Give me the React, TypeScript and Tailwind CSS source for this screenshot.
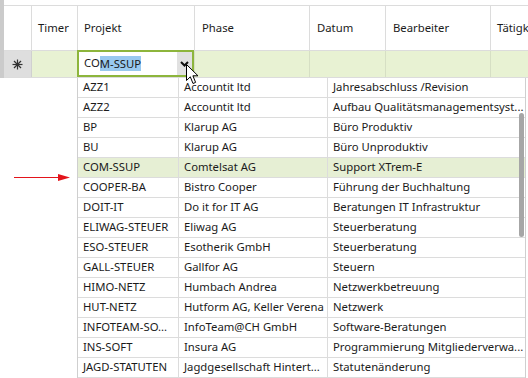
const rows: [string, string, string][] = [
  ['AZZ1', 'Accountit ltd', 'Jahresabschluss /Revision'],
  ['AZZ2', 'Accountit ltd', 'Aufbau Qualitätsmanagementsyst...'],
  ['BP', 'Klarup AG', 'Büro Produktiv'],
  ['BU', 'Klarup AG', 'Büro Unproduktiv'],
  ['COM-SSUP', 'Comtelsat AG', 'Support XTrem-E'],
  ['COOPER-BA', 'Bistro Cooper', 'Führung der Buchhaltung'],
  ['DOIT-IT', 'Do it for IT AG', 'Beratungen IT Infrastruktur'],
  ['ELIWAG-STEUER', 'Eliwag AG', 'Steuerberatung'],
  ['ESO-STEUER', 'Esotherik GmbH', 'Steuerberatung'],
  ['GALL-STEUER', 'Gallfor AG', 'Steuern'],
  ['HIMO-NETZ', 'Humbach Andrea', 'Netzwerkbetreuung'],
  ['HUT-NETZ', 'Hutform AG, Keller Verena', 'Netzwerk'],
  ['INFOTEAM-SO...', 'InfoTeam@CH GmbH', 'Software-Beratungen'],
  ['INS-SOFT', 'Insura AG', 'Programmierung Mitgliederverwa...'],
  ['JAGD-STATUTEN', 'Jagdgesellschaft Hintert...', 'Statutenänderung'],
];

const selected = 'COM-SSUP';

function Asterisk() {
  return (
    <svg width="11" height="11" viewBox="0 0 11 11" stroke="#333" strokeWidth="1.2">
      <line x1="5.5" y1="0.5" x2="5.5" y2="10.5" />
      <line x1="0.5" y1="5.5" x2="10.5" y2="5.5" />
      <line x1="2" y1="2" x2="9" y2="9" />
      <line x1="9" y1="2" x2="2" y2="9" />
    </svg>
  );
}

export default function App() {
  return (
    <div
      className="relative w-[528px] h-[378px] overflow-hidden bg-white text-[11.3px] text-[#1b1b1b]"
      style={{ fontFamily: '"Segoe UI", "Noto Sans", sans-serif' }}
    >
      {/* grid header + new row */}
      <div className="flex h-[78px]">
        <div className="w-[4px] shrink-0 bg-[#cbcbcb]" />
        <div className="flex-1 min-w-0 pt-[5px]">
          <div className="flex h-[46px] border-t border-b border-[#dcdcdc]">
            <div className="w-[28px] shrink-0 border-r border-[#dcdcdc]" />
            <div className="w-[46px] shrink-0 border-r border-[#dcdcdc] flex items-center pl-[6px]">Timer</div>
            <div className="w-[117px] shrink-0 border-r border-[#dcdcdc] flex items-center pl-[6px]">Projekt</div>
            <div className="w-[115px] shrink-0 border-r border-[#dcdcdc] flex items-center pl-[7px]">Phase</div>
            <div className="w-[76px] shrink-0 border-r border-[#dcdcdc] flex items-center pl-[7px]">Datum</div>
            <div className="w-[105px] shrink-0 border-r border-[#dcdcdc] flex items-center pl-[7px]">Bearbeiter</div>
            <div className="flex-1 min-w-0 overflow-hidden flex items-center pl-[6px] whitespace-nowrap">Tätigkeit</div>
          </div>
          <div className="flex h-[27px] bg-[#e8f2d3] border-b border-[#dcdcdc]">
            <div className="w-[28px] shrink-0 bg-[#dedede] border-r border-[#d0d0d0] flex items-center justify-center">
              <Asterisk />
            </div>
            <div className="w-[46px] shrink-0 border-r border-[#d6dfc4]" />
            <div className="w-[117px] shrink-0 border-r border-[#d6dfc4]" />
            <div className="w-[115px] shrink-0 border-r border-[#d6dfc4]" />
            <div className="w-[76px] shrink-0 border-r border-[#d6dfc4]" />
            <div className="w-[105px] shrink-0 border-r border-[#d6dfc4]" />
            <div className="flex-1 min-w-0" />
          </div>
        </div>
      </div>

      {/* combo editor */}
      <div className="absolute left-[77px] top-[50px] w-[117px] h-[27px] border-2 border-[#8db53c] bg-white flex items-center">
        <div className="flex-1 pl-[5px] flex items-center">
          <span>CO</span>
          <span className="bg-[#99c9ef] leading-[15px]">M-SSUP</span>
        </div>
        <div className="w-[15px] h-[23px] bg-[#e1e1e1] flex items-center justify-center">
          <svg width="9" height="6" viewBox="0 0 9 6" fill="none" stroke="#111" strokeWidth="2">
            <path d="M1 1 L4.5 4.5 L8 1" />
          </svg>
        </div>
      </div>

      {/* dropdown list */}
      <div className="absolute left-[77px] top-[78px] w-[449px] border-l border-r border-[#cfcfcf] bg-white">
        {rows.map(([code, client, phase]) => (
          <div
            key={code}
            className={`flex h-[20px] border-b border-[#dcdcdc] ${code === selected ? 'bg-[#e6efd4]' : ''}`}
          >
            <div className="w-[101px] shrink-0 border-r border-[#dcdcdc] pl-[5px] flex items-center whitespace-nowrap overflow-hidden">
              {code}
            </div>
            <div className="w-[149px] shrink-0 border-r border-[#dcdcdc] pl-[5px] flex items-center whitespace-nowrap overflow-hidden">
              {client}
            </div>
            <div className="flex-1 min-w-0 pl-[5px] flex items-center whitespace-nowrap overflow-hidden">{phase}</div>
          </div>
        ))}
        <div className="absolute right-[1px] top-[35px] w-[5px] h-[124px] rounded-full bg-[#a6a6a6]" />
      </div>

      {/* red arrow annotation */}
      <svg className="absolute left-[12px] top-[172px]" width="60" height="12" viewBox="0 0 60 12">
        <line x1="2" y1="5.5" x2="48" y2="5.5" stroke="#e3141b" strokeWidth="1.2" />
        <path d="M46 2 L58 5.5 L46 9 Z" fill="#e3141b" />
      </svg>

      {/* mouse cursor */}
      <svg className="absolute left-[186px] top-[64px]" width="14" height="22" viewBox="0 0 14 22">
        <path
          d="M0.5 0.5 L0.5 16.5 L4.3 12.8 L7 19.5 L9.6 18.4 L6.9 11.8 L12 11.8 Z"
          fill="#fff"
          stroke="#000"
          strokeWidth="1"
          strokeLinejoin="round"
        />
      </svg>
    </div>
  );
}
